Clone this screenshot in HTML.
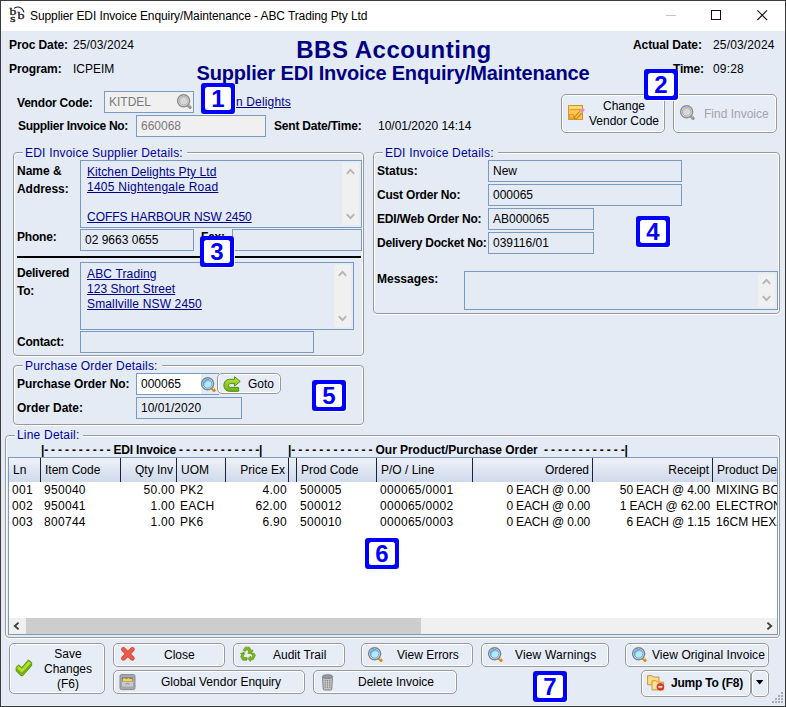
<!DOCTYPE html>
<html><head><meta charset="utf-8"><title>Supplier EDI Invoice Enquiry/Maintenance</title>
<style>
*{box-sizing:border-box;margin:0;padding:0}
html,body{width:786px;height:707px;overflow:hidden}
body{background:#e4ebf5;font-family:"Liberation Sans",Arial,sans-serif;font-size:12px;color:#000;position:relative}
.a{position:absolute;white-space:nowrap;line-height:14px}
.b{font-weight:bold;letter-spacing:-0.2px}
.in{position:absolute;border:1px solid #7a9ac0;background:#e4ebf5;height:22px;line-height:20px;padding-left:4px;white-space:nowrap;overflow:hidden}
.dis{background:#f0f0f0;color:#7a7a7a}
.ta{line-height:15px;padding-top:4px;padding-left:6px}
.gb{position:absolute;border:1px solid #999;border-radius:4px;box-shadow:inset 1px 1px 0 #fff,inset -1px 0 0 #fff,0 1px 0 #fff}
.lg{letter-spacing:0.2px;position:absolute;background:#e4ebf5;color:#00009c;padding:0 4px 0 2px;line-height:14px;white-space:nowrap}
.btn{position:absolute;border:1px solid #9a9a9a;border-radius:5px;background:#e7edf6;box-shadow:inset 0 0 0 1px #fff;white-space:nowrap}
.lk{color:#00008b;text-decoration:underline;letter-spacing:0.15px}
.num{position:absolute;width:34px;height:31px;padding:4px;border-radius:3px;background:#00f;box-shadow:1px 1px 0 rgba(255,255,255,.85)}
.num b{display:block;width:26px;height:23px;border-radius:2.5px;background:#fff;color:#00f;font-weight:bold;font-size:24px;line-height:23px;text-align:center}
.sb{position:absolute;width:17px;background:#f0f0f0}
svg{position:absolute;overflow:visible}
</style></head><body>
<div class="a" style="left:0;top:0;width:786px;height:31px;background:#fff"></div>
<div class="a" id="ttl" style="left:30px;top:8px;line-height:16px;letter-spacing:-0.1px">Supplier EDI Invoice Enquiry/Maintenance - ABC Trading Pty Ltd</div>
<svg style="left:9px;top:5px" width="18" height="19" viewBox="0 0 18 19"><g font-family="'Liberation Serif',serif" fill="#1c1c1c" stroke="#1c1c1c" stroke-width="0.3" font-size="10.5"><text x="0.6" y="9.8" textLength="6.8" lengthAdjust="spacingAndGlyphs">b</text><text x="8.6" y="14" textLength="7" lengthAdjust="spacingAndGlyphs">b</text><text x="1" y="17" textLength="5.6" lengthAdjust="spacingAndGlyphs">s</text></g><path d="M5.2 3.4 C8 1.2 13 1.2 15 7.4" fill="none" stroke="#1c1c1c" stroke-width="1.15"/></svg>
<div class="a" style="left:666px;top:15px;width:10px;height:1px;background:#c4c4c4"></div>
<div class="a" style="left:711px;top:10px;width:10px;height:10px;border:1px solid #111"></div>
<svg style="left:757px;top:10px" width="11" height="11" viewBox="0 0 11 11"><path d="M0.4 0.4 L10 10 M10 0.4 L0.4 10" stroke="#111" stroke-width="1.1" fill="none"/></svg>
<div class="a b" style="left:9px;top:38px;letter-spacing:-0.1px">Proc Date:</div>
<div class="a " style="left:73px;top:38px;letter-spacing:0.1px">25/03/2024</div>
<div class="a b" style="left:9px;top:62px;letter-spacing:-0.1px">Program:</div>
<div class="a " style="left:73px;top:62px">ICPEIM</div>
<div class="a" id="h1" style="left:94px;width:600px;text-align:center;top:36px;font-size:24px;line-height:28px;color:#000080;font-weight:bold;letter-spacing:0.5px">BBS Accounting</div>
<div class="a" id="h2" style="left:93px;width:600px;text-align:center;top:61px;font-size:20px;line-height:24px;color:#000080;font-weight:bold;letter-spacing:-0.18px">Supplier EDI Invoice Enquiry/Maintenance</div>
<div class="a b" style="left:633px;top:38px;letter-spacing:-0.1px">Actual Date:</div>
<div class="a " style="left:713px;top:38px;letter-spacing:0.15px">25/03/2024</div>
<div class="a b" style="left:673px;top:62px">Time:</div>
<div class="a " style="left:713px;top:62px;letter-spacing:0.15px">09:28</div>
<div class="a b" style="left:17px;top:96px">Vendor Code:</div>
<div class="in dis" style="left:104px;top:91px;width:90px">KITDEL</div>
<svg style="left:177px;top:94px" width="16" height="16" viewBox="0 0 16 16"><defs><radialGradient id="mg17794" cx="0.62" cy="0.66" r="0.7"><stop offset="0" stop-color="#d8d8d8"/><stop offset="0.55" stop-color="#d8d8d8"/><stop offset="1" stop-color="#c2c2c2"/></radialGradient></defs><path d="M11 11.2 L13.1 13.3" stroke="#939393" stroke-width="3.2" stroke-linecap="round"/><path d="M11.4 10.4 L12.8 11.8" stroke="#c0c0c0" stroke-width="1.4" stroke-linecap="round"/><circle cx="6.6" cy="6.8" r="6" fill="#f2f2f2" stroke="#8e8e8e" stroke-width="1.5"/><circle cx="6.6" cy="6.8" r="4.4" fill="url(#mg17794)" stroke="#a4a4a4" stroke-width="0.9"/></svg>
<div class="a lk" style="left:236px;top:95px">n Delights</div>
<div class="a b" style="left:18px;top:119px;letter-spacing:-0.3px">Supplier Invoice No:</div>
<div class="in dis" style="left:136px;top:115px;width:130px">660068</div>
<div class="a b" style="left:274px;top:119px">Sent Date/Time:</div>
<div class="a " style="left:378px;top:119px">10/01/2020 14:14</div>
<div class="btn" style="left:561px;top:94px;width:104px;height:39px"><div class="a" style="left:20px;width:84px;top:4px;line-height:15px;text-align:center;white-space:normal">Change<br>Vendor Code</div></div>
<svg style="left:568px;top:105px" width="17" height="16" viewBox="0 0 17 16"><rect x="0.5" y="0.5" width="14" height="14" fill="#f8c64f" stroke="#d9962a"/><rect x="1.5" y="1.5" width="12" height="2" fill="#fde08a"/><path d="M1.5 4.5 H13.5" stroke="#e0a030" stroke-width="1"/><rect x="1.5" y="9.5" width="4" height="4" fill="#f3b53c" stroke="#d9962a" stroke-width="0.8"/><path d="M7 13.5 L13.5 6.5" stroke="#c9780e" stroke-width="3.6"/><path d="M7 13.5 L13.5 6.5" stroke="#f7a928" stroke-width="2.2"/><path d="M7.6 12.8 L13 7" stroke="#ffd97a" stroke-width="0.9"/><path d="M12.6 7.6 L14.2 5.8" stroke="#c8c8c8" stroke-width="2.6"/><path d="M14 6 L15.2 4.8" stroke="#e58ad0" stroke-width="2.8" stroke-linecap="round"/><path d="M6.2 14.4 L7.6 13 L6.6 12.4 Z" fill="#555"/></svg>
<div class="btn" style="left:673px;top:94px;width:104px;height:39px"><div class="a" style="left:30px;top:12px;color:#a3a3ab">Find Invoice</div></div>
<svg style="left:680px;top:105px" width="16" height="16" viewBox="0 0 16 16"><defs><radialGradient id="mg680105" cx="0.62" cy="0.66" r="0.7"><stop offset="0" stop-color="#d8d8d8"/><stop offset="0.55" stop-color="#d8d8d8"/><stop offset="1" stop-color="#c2c2c2"/></radialGradient></defs><path d="M11 11.2 L13.1 13.3" stroke="#939393" stroke-width="3.2" stroke-linecap="round"/><path d="M11.4 10.4 L12.8 11.8" stroke="#c0c0c0" stroke-width="1.4" stroke-linecap="round"/><circle cx="6.6" cy="6.8" r="6" fill="#f2f2f2" stroke="#8e8e8e" stroke-width="1.5"/><circle cx="6.6" cy="6.8" r="4.4" fill="url(#mg680105)" stroke="#a4a4a4" stroke-width="0.9"/></svg>
<div class="gb" style="left:13px;top:152px;width:351px;height:204px"></div>
<div class="lg" style="left:23px;top:146px">EDI Invoice Supplier Details:</div>
<div class="a b" style="left:17px;top:164px;letter-spacing:0px">Name &amp;</div>
<div class="a b" style="left:17px;top:182px;letter-spacing:-0.05px">Address:</div>
<div class="in ta" style="left:80px;top:160px;width:282px;height:68px"><span class="lk" style="letter-spacing:0.09px">Kitchen Delights Pty Ltd</span><br><span class="lk" style="letter-spacing:0.25px">1405 Nightengale Road</span><br><br><span class="lk" style="letter-spacing:-0.03px">COFFS HARBOUR NSW 2450</span></div>
<div class="sb" style="left:342px;top:163px;height:62px"></div>
<svg style="left:346px;top:168px" width="9" height="7" viewBox="0 0 9 7"><path d="M0.8 5.8 L4.5 1.8 L8.2 5.8" fill="none" stroke="#b4b4b4" stroke-width="1.8"/></svg>
<svg style="left:346px;top:213px" width="9" height="7" viewBox="0 0 9 7"><path d="M0.8 1.2 L4.5 5.2 L8.2 1.2" fill="none" stroke="#b4b4b4" stroke-width="1.8"/></svg>
<div class="a b" style="left:17px;top:230px">Phone:</div>
<div class="in" style="left:80px;top:229px;width:114px">02 9663 0655</div>
<div class="a b" style="left:201px;top:230px">Fax:</div>
<div class="in" style="left:232px;top:229px;width:130px"></div>
<div class="a" style="left:17px;top:256px;width:344px;height:2px;background:#000"></div>
<div class="a b" style="left:17px;top:266px">Delivered</div>
<div class="a b" style="left:17px;top:284px">To:</div>
<div class="in ta" style="left:80px;top:262px;width:274px;height:68px"><span class="lk">ABC Trading</span><br><span class="lk" style="letter-spacing:0.05px">123 Short Street</span><br><span class="lk">Smallville NSW 2450</span></div>
<div class="sb" style="left:334px;top:265px;height:62px"></div>
<svg style="left:338px;top:270px" width="9" height="7" viewBox="0 0 9 7"><path d="M0.8 5.8 L4.5 1.8 L8.2 5.8" fill="none" stroke="#b4b4b4" stroke-width="1.8"/></svg>
<svg style="left:338px;top:315px" width="9" height="7" viewBox="0 0 9 7"><path d="M0.8 1.2 L4.5 5.2 L8.2 1.2" fill="none" stroke="#b4b4b4" stroke-width="1.8"/></svg>
<div class="a b" style="left:17px;top:335px">Contact:</div>
<div class="in" style="left:80px;top:331px;width:234px"></div>
<div class="gb" style="left:13px;top:365px;width:351px;height:60px"></div>
<div class="lg" style="left:23px;top:359px">Purchase Order Details:</div>
<div class="a b" style="left:17px;top:377px;letter-spacing:-0.05px">Purchase Order No:</div>
<div class="in" style="left:136px;top:373px;width:83px;border-right:none"><div class="a" style="left:0;top:0;width:64px;height:20px;background:#fff"></div><span style="position:relative">000065</span></div>
<svg style="left:201px;top:377px" width="16" height="16" viewBox="0 0 16 16"><defs><radialGradient id="mc201377" cx="0.62" cy="0.66" r="0.7"><stop offset="0" stop-color="#b4e8fb"/><stop offset="0.55" stop-color="#b4e8fb"/><stop offset="1" stop-color="#3f97e4"/></radialGradient></defs><path d="M11 11.2 L13.1 13.3" stroke="#d48a1a" stroke-width="3.2" stroke-linecap="round"/><path d="M11.4 10.4 L12.8 11.8" stroke="#f7d9a0" stroke-width="1.4" stroke-linecap="round"/><circle cx="6.6" cy="6.8" r="6" fill="#f7f4f0" stroke="#858585" stroke-width="1.5"/><circle cx="6.6" cy="6.8" r="4.4" fill="url(#mc201377)" stroke="#3f97e4" stroke-width="0.9"/></svg>
<div class="btn" style="left:217px;top:373px;width:64px;height:21px"><div class="a" style="left:30px;top:3px">Goto</div></div>
<svg style="left:223px;top:375.5px" width="18" height="16" viewBox="0 0 18 16"><defs><linearGradient id="gg" x1="0" y1="0" x2="0" y2="1"><stop offset="0" stop-color="#bfe548"/><stop offset="1" stop-color="#6fae18"/></linearGradient></defs><path d="M11.5 0.7 L17.2 5.4 L11.5 10.1 V7.6 H7.2 C5.2 7.6 5.2 11.4 7.2 11.4 H15.6 V15.3 H6.5 C-1 15.3 -1 3.3 6.5 3.3 H11.5 Z" fill="url(#gg)" stroke="#4f8f10" stroke-width="1" stroke-linejoin="round"/></svg>
<div class="a b" style="left:17px;top:401px;letter-spacing:0px">Order Date:</div>
<div class="in" style="left:136px;top:397px;width:106px">10/01/2020</div>
<div class="gb" style="left:373px;top:152px;width:407px;height:162px"></div>
<div class="lg" style="left:383px;top:146px">EDI Invoice Details:</div>
<div class="a b" style="left:377px;top:164px;letter-spacing:0px">Status:</div>
<div class="in" style="left:488px;top:160px;width:194px">New</div>
<div class="a b" style="left:377px;top:188px">Cust Order No:</div>
<div class="in" style="left:488px;top:184px;width:194px">000065</div>
<div class="a b" style="left:377px;top:212px">EDI/Web Order No:</div>
<div class="in" style="left:488px;top:208px;width:106px">AB000065</div>
<div class="a b" style="left:377px;top:236px">Delivery Docket No:</div>
<div class="in" style="left:488px;top:232px;width:106px">039116/01</div>
<div class="a b" style="left:377px;top:272px;letter-spacing:0px">Messages:</div>
<div class="in ta" style="left:464px;top:271px;width:314px;height:39px"></div>
<div class="sb" style="left:758px;top:274px;height:33px"></div>
<svg style="left:762px;top:278px" width="9" height="7" viewBox="0 0 9 7"><path d="M0.8 5.8 L4.5 1.8 L8.2 5.8" fill="none" stroke="#b4b4b4" stroke-width="1.8"/></svg>
<svg style="left:762px;top:295px" width="9" height="7" viewBox="0 0 9 7"><path d="M0.8 1.2 L4.5 5.2 L8.2 1.2" fill="none" stroke="#b4b4b4" stroke-width="1.8"/></svg>
<div class="gb" style="left:5px;top:435px;width:775px;height:203px"></div>
<div class="lg" style="left:15px;top:428px">Line Detail:</div>
<div class="a b" style="left:41px;top:443px">|- - - - - - - - - - EDI Invoice - - - - - - - - - - - -|</div>
<div class="a b" style="left:288px;top:443px"><span style="letter-spacing:-0.15px">|- - - - - - - - - - - - </span><span style="letter-spacing:-0.05px">Our Product/Purchase Order</span><span style="letter-spacing:-0.18px">&nbsp; - - - - - - - - - - - -|</span></div>
<div class="a" id="grid" style="left:8px;top:457px;width:770px;height:178px;border:1px solid #7a9ac0;background:#fff;overflow:hidden">
<div class="a" style="left:0;top:0;width:900px;height:24px;background:linear-gradient(#eef2f9,#cfd9ea)"></div>
<div class="a" style="left:4px;top:5px">Ln</div>
<div class="a" style="left:31px;top:0;width:1px;height:24px;background:#1a2440"></div>
<div class="a" style="left:36px;top:5px">Item Code</div>
<div class="a" style="left:111px;top:0;width:1px;height:24px;background:#1a2440"></div>
<div class="a" style="left:111px;width:53px;text-align:right;top:5px">Qty Inv</div>
<div class="a" style="left:167px;top:0;width:1px;height:24px;background:#1a2440"></div>
<div class="a" style="left:172px;top:5px">UOM</div>
<div class="a" style="left:216px;top:0;width:1px;height:24px;background:#1a2440"></div>
<div class="a" style="left:216px;width:60px;text-align:right;top:5px">Price Ex</div>
<div class="a" style="left:279px;top:0;width:1px;height:24px;background:#1a2440"></div>
<div class="a" style="left:287px;top:0;width:1px;height:24px;background:#1a2440"></div>
<div class="a" style="left:292px;top:5px">Prod Code</div>
<div class="a" style="left:367px;top:0;width:1px;height:24px;background:#1a2440"></div>
<div class="a" style="left:372px;top:5px">P/O / Line</div>
<div class="a" style="left:463px;top:0;width:1px;height:24px;background:#1a2440"></div>
<div class="a" style="left:463px;width:117px;text-align:right;top:5px">Ordered</div>
<div class="a" style="left:583px;top:0;width:1px;height:24px;background:#1a2440"></div>
<div class="a" style="left:583px;width:117px;text-align:right;top:5px">Receipt</div>
<div class="a" style="left:703px;top:0;width:1px;height:24px;background:#1a2440"></div>
<div class="a" style="left:708px;top:5px">Product Description</div>
<div class="a" style="left:3px;top:25px;letter-spacing:0.3px">001</div>
<div class="a" style="left:35px;top:25px;letter-spacing:0.3px">950040</div>
<div class="a" style="left:111px;width:55px;text-align:right;top:25px;letter-spacing:0.3px">50.00</div>
<div class="a" style="left:171px;top:25px;letter-spacing:0.3px">PK2</div>
<div class="a" style="left:216px;width:62px;text-align:right;top:25px;letter-spacing:0.3px">4.00</div>
<div class="a" style="left:291px;top:25px;letter-spacing:0.3px">500005</div>
<div class="a" style="left:371px;top:25px;letter-spacing:0.3px">000065/0001</div>
<div class="a" style="left:463px;width:118px;text-align:right;top:25px;letter-spacing:-0.15px">0 EACH @ 0.00</div>
<div class="a" style="left:583px;width:118px;text-align:right;top:25px;letter-spacing:-0.15px">50 EACH @ 4.00</div>
<div class="a" style="left:707px;top:25px;letter-spacing:0.05px">MIXING BOWL</div>
<div class="a" style="left:3px;top:41px;letter-spacing:0.3px">002</div>
<div class="a" style="left:35px;top:41px;letter-spacing:0.3px">950041</div>
<div class="a" style="left:111px;width:55px;text-align:right;top:41px;letter-spacing:0.3px">1.00</div>
<div class="a" style="left:171px;top:41px;letter-spacing:0.3px">EACH</div>
<div class="a" style="left:216px;width:62px;text-align:right;top:41px;letter-spacing:0.3px">62.00</div>
<div class="a" style="left:291px;top:41px;letter-spacing:0.3px">500012</div>
<div class="a" style="left:371px;top:41px;letter-spacing:0.3px">000065/0002</div>
<div class="a" style="left:463px;width:118px;text-align:right;top:41px;letter-spacing:-0.15px">0 EACH @ 0.00</div>
<div class="a" style="left:583px;width:118px;text-align:right;top:41px;letter-spacing:-0.15px">1 EACH @ 62.00</div>
<div class="a" style="left:707px;top:41px;letter-spacing:0.05px">ELECTRONIC SCALE</div>
<div class="a" style="left:3px;top:57px;letter-spacing:0.3px">003</div>
<div class="a" style="left:35px;top:57px;letter-spacing:0.3px">800744</div>
<div class="a" style="left:111px;width:55px;text-align:right;top:57px;letter-spacing:0.3px">1.00</div>
<div class="a" style="left:171px;top:57px;letter-spacing:0.3px">PK6</div>
<div class="a" style="left:216px;width:62px;text-align:right;top:57px;letter-spacing:0.3px">6.90</div>
<div class="a" style="left:291px;top:57px;letter-spacing:0.3px">500010</div>
<div class="a" style="left:371px;top:57px;letter-spacing:0.3px">000065/0003</div>
<div class="a" style="left:463px;width:118px;text-align:right;top:57px;letter-spacing:-0.15px">0 EACH @ 0.00</div>
<div class="a" style="left:583px;width:118px;text-align:right;top:57px;letter-spacing:-0.15px">6 EACH @ 1.15</div>
<div class="a" style="left:707px;top:57px;letter-spacing:0.05px">16CM HEXAGONAL PLATE</div>
<div class="a" style="left:0;top:160px;width:768px;height:16px;background:#f0f0f0"></div>
<div class="a" style="left:17px;top:160px;width:395px;height:16px;background:#cdcdcd"></div>
<svg style="left:4px;top:164px" width="8" height="8" viewBox="0 0 8 8"><path d="M5.6 0.6 L1.8 4 L5.6 7.4" fill="none" stroke="#404040" stroke-width="1.9"/></svg>
<svg style="left:757px;top:164px" width="8" height="8" viewBox="0 0 8 8"><path d="M1.4 0.6 L5.2 4 L1.4 7.4" fill="none" stroke="#404040" stroke-width="1.9"/></svg>
</div>
<div class="btn" style="left:9px;top:643px;width:96px;height:51px"><div class="a" style="left:22px;width:72px;top:3px;line-height:15px;text-align:center;white-space:normal">Save<br>Changes<br>(F6)</div></div>
<svg style="left:15px;top:659px" width="18" height="18" viewBox="0 0 18 18"><path d="M1.2 8.6 L3.6 6 L6.8 8.8 L13.4 1.2 L16.6 3.6 V6.4 L7.6 16.6 H6 L1.2 11.6 Z" fill="#9ccc1e" stroke="#5f9e0f" stroke-width="1.1" stroke-linejoin="round"/><path d="M2.2 8.8 L3.7 7.3 L6.9 10.3 L13.6 2.6 L15.6 4.1 L7 13.2 Z" fill="#b6e03a"/><path d="M1.8 10.6 L6.9 15 L16.2 5.2" fill="none" stroke="#6aa612" stroke-width="1.1"/></svg>
<div class="btn" style="left:113px;top:643px;width:112px;height:24px"><div class="a" style="left:50px;top:4px">Close</div></div>
<div class="btn" style="left:233px;top:643px;width:112px;height:24px"><div class="a" style="left:39px;top:4px">Audit Trail</div></div>
<div class="btn" style="left:361px;top:643px;width:112px;height:24px"><div class="a" style="left:35px;top:4px">View Errors</div></div>
<div class="btn" style="left:481px;top:643px;width:128px;height:24px"><div class="a" style="left:33px;top:4px;letter-spacing:0.15px">View Warnings</div></div>
<div class="btn" style="left:625px;top:643px;width:144px;height:24px"><div class="a" style="left:26px;top:4px;letter-spacing:0.05px">View Original Invoice</div></div>
<div class="btn" style="left:113px;top:670px;width:192px;height:24px"><div class="a" style="left:47px;top:4px">Global Vendor Enquiry</div></div>
<div class="btn" style="left:313px;top:670px;width:144px;height:24px"><div class="a" style="left:44px;top:4px">Delete Invoice</div></div>
<div class="btn" style="left:641px;top:670px;width:110px;height:27px"><div class="a b" style="left:29px;top:5px">Jump To (F8)</div></div>
<div class="btn" style="left:751px;top:670px;width:18px;height:27px"></div>
<svg style="left:756px;top:680px" width="8" height="5" viewBox="0 0 8 5"><path d="M0 0 H7.4 L3.7 4.4 Z" fill="#000"/></svg>
<svg style="left:120px;top:646px" width="16" height="16" viewBox="0 0 16 16"><path d="M3.4 3.4 L12.4 12.4 M12.4 3.4 L3.4 12.4" stroke="#d5412f" stroke-width="4.6" stroke-linecap="round"/><path d="M3.4 3.4 L12.4 12.4 M12.4 3.4 L3.4 12.4" stroke="#ee5a45" stroke-width="3" stroke-linecap="round"/></svg>
<svg style="left:240px;top:646px" width="16" height="16" viewBox="0 0 16 16"><g fill="#7fb51a" stroke="#5c8f0c" stroke-width="0.6" stroke-linejoin="round"><path d="M5.2 1.2 H9.4 L11.6 4.8 L13 4 L11.6 8 L7.6 7.2 L9 6.4 L7.6 3.8 H6.4 L5.4 5.4 L3.2 4.2 Z"/><path d="M2.6 6 L4.8 7.2 L3.2 10.2 L4 11.6 H7 V14.2 H2.6 L0.6 10.6 L1.8 8.4 L0.4 7.6 L4.2 6.6 Z"/><path d="M15.4 9.4 L13.4 13.4 L10.6 14.2 V15.6 L7.8 12.8 L10.6 10 V11.4 H12 L12.8 10 L11.6 8 L14 7 Z"/></g></svg>
<svg style="left:368px;top:647px" width="16" height="16" viewBox="0 0 16 16"><defs><radialGradient id="mc368647" cx="0.62" cy="0.66" r="0.7"><stop offset="0" stop-color="#b4e8fb"/><stop offset="0.55" stop-color="#b4e8fb"/><stop offset="1" stop-color="#3f97e4"/></radialGradient></defs><path d="M11 11.2 L13.1 13.3" stroke="#d48a1a" stroke-width="3.2" stroke-linecap="round"/><path d="M11.4 10.4 L12.8 11.8" stroke="#f7d9a0" stroke-width="1.4" stroke-linecap="round"/><circle cx="6.6" cy="6.8" r="6" fill="#f7f4f0" stroke="#858585" stroke-width="1.5"/><circle cx="6.6" cy="6.8" r="4.4" fill="url(#mc368647)" stroke="#3f97e4" stroke-width="0.9"/></svg>
<svg style="left:488px;top:647px" width="16" height="16" viewBox="0 0 16 16"><defs><radialGradient id="mc488647" cx="0.62" cy="0.66" r="0.7"><stop offset="0" stop-color="#b4e8fb"/><stop offset="0.55" stop-color="#b4e8fb"/><stop offset="1" stop-color="#3f97e4"/></radialGradient></defs><path d="M11 11.2 L13.1 13.3" stroke="#d48a1a" stroke-width="3.2" stroke-linecap="round"/><path d="M11.4 10.4 L12.8 11.8" stroke="#f7d9a0" stroke-width="1.4" stroke-linecap="round"/><circle cx="6.6" cy="6.8" r="6" fill="#f7f4f0" stroke="#858585" stroke-width="1.5"/><circle cx="6.6" cy="6.8" r="4.4" fill="url(#mc488647)" stroke="#3f97e4" stroke-width="0.9"/></svg>
<svg style="left:632px;top:647px" width="16" height="16" viewBox="0 0 16 16"><defs><radialGradient id="mc632647" cx="0.62" cy="0.66" r="0.7"><stop offset="0" stop-color="#b4e8fb"/><stop offset="0.55" stop-color="#b4e8fb"/><stop offset="1" stop-color="#3f97e4"/></radialGradient></defs><path d="M11 11.2 L13.1 13.3" stroke="#d48a1a" stroke-width="3.2" stroke-linecap="round"/><path d="M11.4 10.4 L12.8 11.8" stroke="#f7d9a0" stroke-width="1.4" stroke-linecap="round"/><circle cx="6.6" cy="6.8" r="6" fill="#f7f4f0" stroke="#858585" stroke-width="1.5"/><circle cx="6.6" cy="6.8" r="4.4" fill="url(#mc632647)" stroke="#3f97e4" stroke-width="0.9"/></svg>
<svg style="left:119px;top:674px" width="17" height="17" viewBox="0 0 17 17"><rect x="1" y="0.6" width="15" height="15" rx="1.5" fill="#a9a9a9" stroke="#8a8a8a"/><rect x="3" y="3.4" width="11" height="4" fill="#707070"/><path d="M3.6 7.4 V5 L5.6 4 L7.4 5 L9.4 4 L11.4 5 L13.4 4.4 V7.4 Z" fill="#f3d34a"/><rect x="2.6" y="7.4" width="11.8" height="5.6" fill="#c9c9c9" stroke="#9a9a9a" stroke-width="0.6"/><path d="M6.8 10.6 C6.8 9 10.2 9 10.2 10.6" fill="none" stroke="#8a8a8a" stroke-width="1"/></svg>
<svg style="left:321px;top:674px" width="13" height="17" viewBox="0 0 13 17"><path d="M1.6 3.6 H11.4 L10.8 15 Q10.6 16 9.4 16 H3.6 Q2.4 16 2.2 15 Z" fill="#c4c4c4" stroke="#808080"/><ellipse cx="6.5" cy="2.6" rx="5.2" ry="1.9" fill="#9a9a9a" stroke="#777" stroke-width="0.9"/><path d="M4.2 6 V14 M6.5 6 V14 M8.8 6 V14" stroke="#777" stroke-width="1" stroke-dasharray="1.2 1"/></svg>
<svg style="left:647px;top:675px" width="18" height="16" viewBox="0 0 18 16"><path d="M0.6 0.6 H5 L6 2 H12 V9.8 H0.6 Z" fill="#f9dc8c" stroke="#d39429" stroke-width="1"/><path d="M5 5.8 H9.4 L10.4 7.2 H16.6 V14.9 H5 Z" fill="#fbe29a" stroke="#d39429" stroke-width="1"/><circle cx="13.4" cy="11.8" r="3.4" fill="#e8402c" stroke="#b32316" stroke-width="0.7"/><rect x="11.4" y="11.1" width="4" height="1.5" fill="#fff"/></svg>
<svg style="left:772px;top:692px" width="12" height="12" viewBox="0 0 12 12"><rect x="9" y="0" width="2" height="2" fill="#a8aeb8"/><rect x="6" y="3" width="2" height="2" fill="#a8aeb8"/><rect x="9" y="3" width="2" height="2" fill="#a8aeb8"/><rect x="3" y="6" width="2" height="2" fill="#a8aeb8"/><rect x="6" y="6" width="2" height="2" fill="#a8aeb8"/><rect x="9" y="6" width="2" height="2" fill="#a8aeb8"/><rect x="0" y="9" width="2" height="2" fill="#a8aeb8"/><rect x="3" y="9" width="2" height="2" fill="#a8aeb8"/><rect x="6" y="9" width="2" height="2" fill="#a8aeb8"/><rect x="9" y="9" width="2" height="2" fill="#a8aeb8"/></svg>
<div class="num" style="left:201px;top:83px"><b>1</b></div>
<div class="num" style="left:644px;top:69px"><b>2</b></div>
<div class="num" style="left:200px;top:236px"><b>3</b></div>
<div class="num" style="left:636px;top:216px"><b>4</b></div>
<div class="num" style="left:312px;top:380px"><b>5</b></div>
<div class="num" style="left:365px;top:538px"><b>6</b></div>
<div class="num" style="left:533px;top:671px"><b>7</b></div>
<div class="a" style="left:0;top:0;width:786px;height:1px;background:#3c3c3c"></div>
<div class="a" style="left:0;top:0;width:1px;height:707px;background:#3c3c3c"></div>
<div class="a" style="left:785px;top:0;width:1px;height:707px;background:#3c3c3c"></div>
<div class="a" style="left:0;top:706px;width:786px;height:1px;background:#3c3c3c"></div>
</body></html>
